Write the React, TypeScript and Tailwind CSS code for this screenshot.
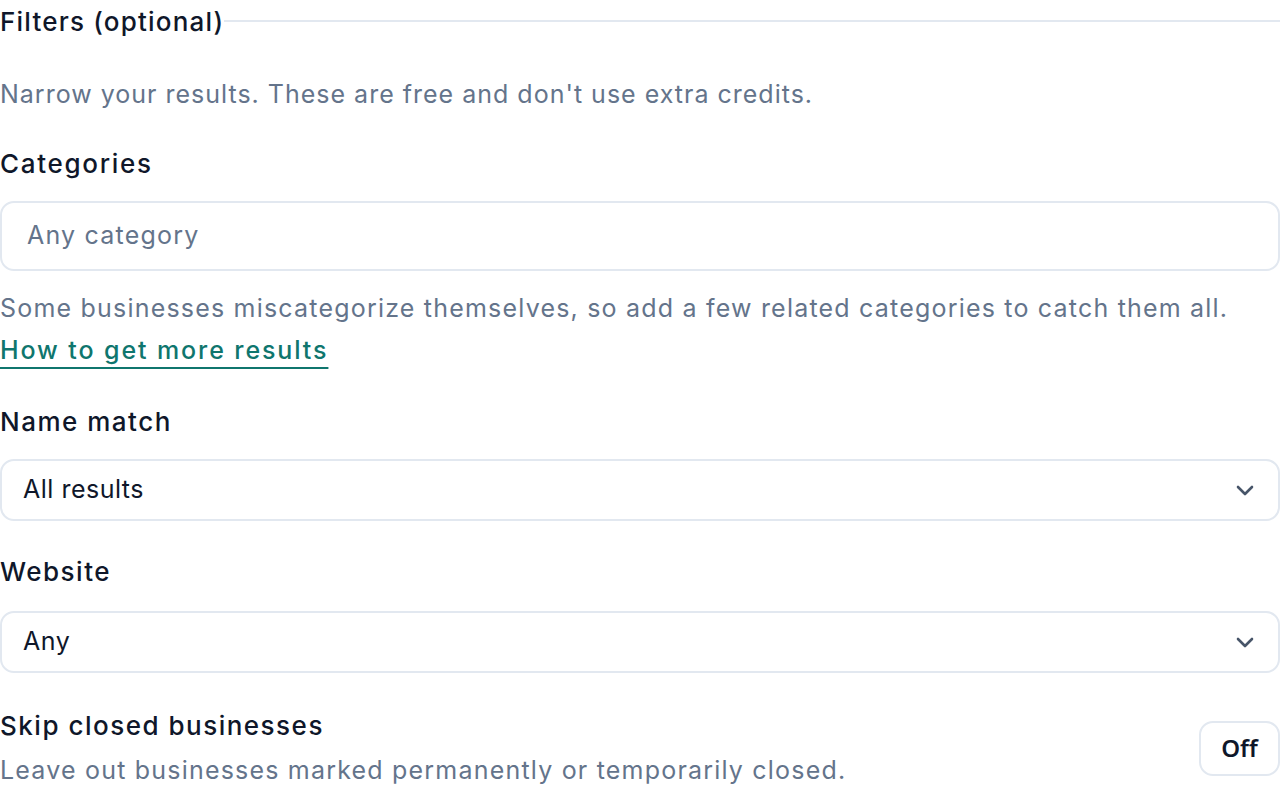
import React from "react";

function Chevron() {
  return (
    <svg width="24" height="24" viewBox="0 0 24 24" fill="none" stroke="#475569" strokeWidth="2.6" strokeLinecap="round" strokeLinejoin="round">
      <path d="M5 9l7 7 7-7" />
    </svg>
  );
}

export default function App() {
  return (
    <div className="w-[1280px] h-[790px] overflow-hidden bg-white text-[#0f172a]" style={{ fontFamily: "Inter, 'Noto Sans', sans-serif" }}>
      <div className="flex items-center h-[44px]">
        <span className="text-[26px] font-medium leading-[44px] whitespace-nowrap tracking-[1.2px]">Filters (optional)</span>
        <div className="flex-1 h-[2px] bg-[#e2e8f0] -mt-[3px]" />
      </div>
      <p className="mt-[32px] text-[25px] leading-[36px] text-[#64748b] tracking-[1px]">Narrow your results. These are free and don't use extra credits.</p>

      <div className="mt-[34px] text-[26px] font-medium leading-[36px] tracking-[1.7px]">Categories</div>
      <div className="mt-[19px] h-[70px] rounded-[14px] border-2 border-[#e2e8f0] flex items-center pl-[25px] text-[25px] text-[#64748b] tracking-[1.2px]">Any category</div>
      <p className="mt-[16px] text-[25px] leading-[42px] text-[#64748b] tracking-[1.2px] whitespace-nowrap">
        Some businesses miscategorize themselves, so add a few related categories to catch them all.
        <br />
        <a className="text-[#0f766e] font-medium underline decoration-2 underline-offset-[8px] tracking-[1.9px]" href="#">How to get more results</a>
      </p>

      <div className="mt-[33px] text-[26px] font-medium leading-[36px] tracking-[1.5px]">Name match</div>
      <div className="mt-[19px] h-[62px] rounded-[14px] border-2 border-[#e2e8f0] flex items-center justify-between pl-[21px] pr-[21px] text-[25px] tracking-[0.5px]">
        <span>All results</span>
        <Chevron />
      </div>

      <div className="mt-[33px] text-[26px] font-medium leading-[36px] tracking-[1.5px]">Website</div>
      <div className="mt-[21px] h-[62px] rounded-[14px] border-2 border-[#e2e8f0] flex items-center justify-between pl-[21px] pr-[21px] text-[25px] tracking-[0.5px]">
        <span>Any</span>
        <Chevron />
      </div>

      <div className="mt-[35px] flex items-center justify-between">
        <div>
          <div className="text-[26px] font-medium leading-[36px] tracking-[1.5px]">Skip closed businesses</div>
          <div className="mt-[8px] text-[25px] leading-[36px] text-[#64748b] tracking-[1.2px]">Leave out businesses marked permanently or temporarily closed.</div>
        </div>
        <button className="w-[81px] h-[55px] rounded-[14px] border-2 border-[#e2e8f0] text-[24px] font-semibold" style={{ fontFamily: "'Noto Sans', sans-serif" }}>Off</button>
      </div>
    </div>
  );
}
